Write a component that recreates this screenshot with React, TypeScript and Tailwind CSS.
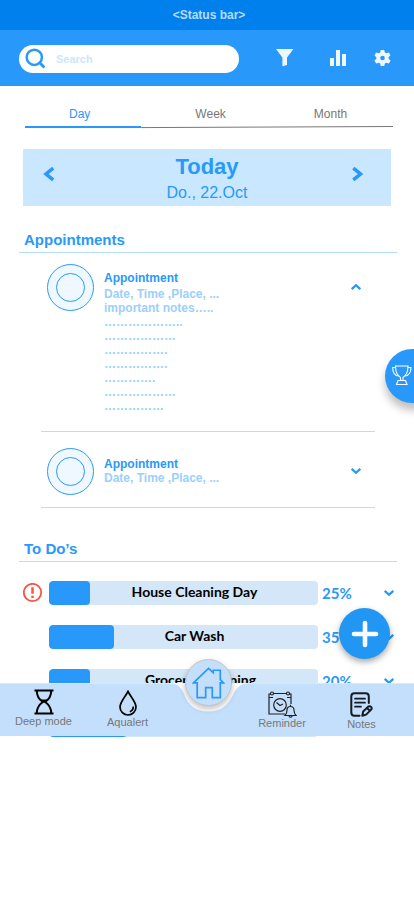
import React from "react";

type Task = { title: string; percent: string; fill: string; shift?: string; urgent?: boolean };

const tasks: Task[] = [
  { title: "House Cleaning Day", percent: "25%", fill: "w-[41px]", urgent: true },
  { title: "Car Wash", percent: "35%", fill: "w-[65px]" },
  { title: "Grocery Shopping", percent: "20%", fill: "w-[41px]", shift: "pl-[34px]" },
  { title: "", percent: "", fill: "w-[78px]" },
];

const notes = [
  "important notes…..",
  "………………..",
  "………………",
  "…………….",
  "…………….",
  "………….",
  "………………",
  "……………",
];

function Chevron({ up = false }: { up?: boolean }) {
  return (
    <svg width="12" height="8" viewBox="0 0 12 8" fill="none" stroke="#2899fb" strokeWidth="2.3">
      <path d={up ? "M1.7 6.2 6 2.2l4.3 4" : "M1.7 1.8 6 5.8l4.3-4"} />
    </svg>
  );
}

function Avatar() {
  return (
    <div className="flex size-[47px] shrink-0 items-center justify-center rounded-full border border-[#2899fb] bg-[#f0f8ff]">
      <div className="size-[29px] rounded-full border border-[#2899fb]" />
    </div>
  );
}

function Header() {
  return (
    <header>
      <div className="flex h-[30px] items-center justify-center bg-[#0080ec] pl-1 text-[12px] font-bold text-[#b5dcff]">
        &lt;Status bar&gt;
      </div>
      <div className="flex h-14 items-center bg-[#2899fb] pl-[19px] pt-0.5">
        <div className="flex h-7 w-[220px] items-center rounded-full bg-white pl-[6px]">
          <svg width="22" height="22" viewBox="0 0 22 22" fill="none" stroke="#2899fb" strokeWidth="2.5">
            <circle cx="9.3" cy="9.300" r="7.6" />
            <path d="m14.5 14.5 4.900 4.900" strokeWidth="2.800" />
          </svg>
          <span className="ml-[9px] text-[11px] font-bold text-[#c9e7ff]">Search</span>
        </div>
        <svg className="-mt-0.5 ml-[37px]" width="18" height="20" viewBox="0 0 18 20" fill="#f0f8ff">
          <path d="M0 1h17.5l-6.500 8.500v7.500L6.4 18.2V9.500z" />
        </svg>
        <svg className="-mt-0.5 ml-9" width="16" height="18" viewBox="0 0 16 18" fill="#f0f8ff">
          <path d="M0 9h4v8H0zM6 1h4v16H6zM12 5h4v12h-4z" />
        </svg>
        <svg className="-mt-0.5 ml-[28px]" width="17" height="18" viewBox="0 0 17 18" fill="#f0f8ff">
          <path
            fillRule="evenodd"
            d="M6.800 1h3.400l.7 2.500 1.400.8 2.600-.7 1.600 3-1.900 1.700v1.500l1.900 1.700-1.600 3-2.600-.7-1.400.8-.7 2.400H6.800l-.7-2.400-1.400-.8-2.600.7-1.600-3 1.900-1.700V8.300L.5 6.600l1.600-3 2.600.7 1.400-.8zM8.500 6.700a2.300 2.300 0 1 0 0 4.600 2.300 2.300 0 0 0 0-4.600z"
          />
        </svg>
      </div>
    </header>
  );
}

function Tabs() {
  return (
    <nav className="ml-[25px] mt-[17px] w-[368px]">
      <div className="mb-px flex h-[22px] items-center text-[12px] text-[#777]">
        <span className="pl-11 text-[#2899fb]">Day</span>
        <span className="ml-[105px]">Week</span>
        <span className="ml-[88px]">Month</span>
      </div>
      <svg className="block" width="368" height="3" viewBox="0 0 368 3">
        <path d="M116 1.600 368 .5" stroke="#777" strokeWidth="1" />
        <path d="M0 1h116" stroke="#2899fb" strokeWidth="2" />
      </svg>
    </nav>
  );
}

function DayBanner() {
  return (
    <div className="ml-[23px] mt-5 flex h-[57px] w-[368px] items-center justify-between bg-[#c9e7ff] pl-5 pr-[27px] text-[#2899fb]">
      <svg width="12" height="16" viewBox="0 0 12 16" fill="none" stroke="#2899fb" strokeWidth="3.500" className="-mt-2">
        <path d="M10.200 2.200 3 8l7.200 5.800" />
      </svg>
      <div className="ml-[7px] flex flex-col items-center pt-[3px]">
        <span className="text-[22px] font-bold leading-[26px]">Today</span>
        <span className="text-[16px] leading-[25px]">Do., 22.Oct</span>
      </div>
      <svg width="12" height="16" viewBox="0 0 12 16" fill="none" stroke="#2899fb" strokeWidth="3.500" className="-mt-[7px]">
        <path d="M1.300 2.200 8.500 8l-7.200 5.800" />
      </svg>
    </div>
  );
}

function SectionTitle({ children }: { children: React.ReactNode }) {
  return (
    <h2 className="ml-[19px] h-6 w-[378px] border-b border-[#b5ddfc] pl-[5px] text-[15px] font-bold leading-[22px] text-[#2899fb]">
      {children}
    </h2>
  );
}

function Appointments() {
  return (
    <section className="mt-[23px]">
      <SectionTitle>Appointments</SectionTitle>
      <article className="ml-[41px] flex h-[179px] w-[334px] items-start border-b border-[#b5ddfc] pl-1.5 pt-[11px] text-[12px] font-bold leading-[14px] text-[#9bd0fd]">
        <Avatar />
        <div className="ml-2.5 w-[243px] pt-[7px]">
          <h3 className="mb-0.5 text-[#2899fb]">Appointment</h3>
          <p>Date, Time ,Place, ...</p>
          {notes.map((line, i) => (
            <p key={i}>{line}</p>
          ))}
        </div>
        <div className="ml-[3px] mt-[19px] shrink-0">
          <Chevron up />
        </div>
      </article>
      <article className="ml-[41px] flex h-[76px] w-[334px] items-center border-b border-[#b5ddfc] pl-1.5 pt-[3px] text-[12px] font-bold leading-[14px] text-[#9bd0fd]">
        <Avatar />
        <div className="-mt-px ml-2.5 w-[243px]">
          <h3 className="text-[#2899fb]">Appointment</h3>
          <p>Date, Time ,Place, ...</p>
        </div>
        <div className="-mt-px ml-[3px] shrink-0">
          <Chevron />
        </div>
      </article>
    </section>
  );
}

function TaskRow({ task }: { task: Task }) {
  return (
    <li className="flex h-6 items-center">
      <div className="w-[26px] shrink-0">
        {task.urgent && (
          <svg width="20" height="20" viewBox="0 0 20 20" fill="none" stroke="#fb5340" strokeWidth="1.800">
            <circle cx="9.500" cy="9.500" r="8.700" />
            <path d="M9.500 4.200v6.500M9.500 12.700v2.200" strokeWidth="2.500" />
          </svg>
        )}
      </div>
      <div className="grid h-6 w-[269px] shrink-0 overflow-hidden rounded bg-[#d3e7f8]">
        <div className={`col-start-1 row-start-1 h-6 rounded bg-[#2899fb] ${task.fill}`} />
        <span
          className={`col-start-1 row-start-1 text-center text-[14px] font-bold leading-[22px] text-black ${task.shift ?? "pl-[22px]"}`}
        >
          {task.title}
        </span>
      </div>
      {task.percent && (
        <>
          <span className="ml-1 w-[61px] pt-px text-[15px] font-bold tracking-[0.1px] text-[#2899fb]">{task.percent}</span>
          <Chevron />
        </>
      )}
    </li>
  );
}

function HourglassIcon() {
  return (
    <svg width="20" height="26" viewBox="0 0 20 26" fill="none" stroke="#000" strokeWidth="2">
      <path d="M.5 1.500h19M.5 24.500h19" />
      <path d="M2.800 2c0 6 2.500 8.500 6 11-3.500 2.500-6 5-6 11M17.200 2c0 6-2.500 8.500-6 11 3.500 2.500 6 5 6 11" />
      <path d="M7 11h6l-3 2.500z" fill="#000" strokeWidth="1" />
    </svg>
  );
}

function DropIcon() {
  return (
    <svg width="20" height="26" viewBox="0 0 20 26" fill="none" stroke="#000" strokeWidth="1.700">
      <path d="M10 1.500C7.500 6.500 2 12 2 17a8 8 0 0 0 16 0c0-5-5.500-10.500-8-15.500z" />
      <path d="M15.300 16.500c0 3-1.500 4.500-3.500 5.200" />
    </svg>
  );
}

function ReminderIcon() {
  return (
    <svg width="29" height="27" viewBox="0 0 29 27" fill="none" stroke="#222" strokeWidth="1.200">
      <path d="M3 3H1v20h16M21 3h2v10M5.500 2.500h13M1 6.500h4M19 6.500h4" />
      <circle cx="4" cy="2.500" r="1.500" />
      <circle cx="20" cy="2.500" r="1.500" />
      <circle cx="12" cy="14" r="6.300" />
      <path d="m8.500 11.500 3.500 3 3-1.500" />
      <path d="M17 24.500h11c-1.700-1.500-2-2.700-2-5.500a3.500 3.500 0 0 0-7 0c0 2.800-.3 4-2 5.500zM21 24.500c0 2.300 3.200 2.300 3.200 0M22.500 15.300V13.800" />
    </svg>
  );
}

function NotesIcon() {
  return (
    <svg width="23" height="25" viewBox="0 0 23 25" fill="none" stroke="#151b22" strokeWidth="2" strokeLinecap="round" strokeLinejoin="round">
      <path d="M9.500 23.700H4.500Q1.300 23.700 1.300 20.500V4.500Q1.300 1.300 4.500 1.300h11Q18.800 1.300 18.800 4.500V11" />
      <path d="M5 6.700h10M5 10.700h10M5 14.700h6" strokeWidth="1.700" />
      <path d="m12.300 23.700.9-4.200 5.200-5q1.500-.8 2.700.4 1.100 1.300.1 2.700l-5.100 5zM17 16l2.700 2.600" strokeWidth="2" />
    </svg>
  );
}

function BottomNav() {
  return (
    <footer className="absolute left-0 top-[683px] h-[53px] w-full bg-[#c3dffc] text-[11px] leading-[13px] text-[#777]">
      <div className="flex h-full border-t border-[#d4e9fd]">
        <div className="flex w-[87px] flex-col items-center pt-[5px]">
          <HourglassIcon />
          <span>Deep mode</span>
        </div>
        <div className="flex w-[81px] flex-col items-center pt-1.5">
          <DropIcon />
          <span>Aqualert</span>
        </div>
        <div className="ml-[72px] flex w-[84px] flex-col items-center pt-[7px]">
          <ReminderIcon />
          <span className="-mt-px">Reminder</span>
        </div>
        <div className="flex w-[75px] flex-col items-center pt-2">
          <NotesIcon />
          <span className="mt-px">Notes</span>
        </div>
      </div>
      <svg className="absolute left-[168px] top-0" width="82" height="30" viewBox="0 0 82 30" fill="#fff">
        <path d="M0 0C10 0 13 4 16 11 20 22 27 28.500 40.500 28.500S60 22 65 12C68 5 72 0 82 0z" />
      </svg>
      <button className="absolute -top-6 left-[185px] flex size-[47px] items-center justify-center rounded-full border border-[#c0c4cc] bg-[#c3dffc] shadow-[0_3px_6px_rgba(0,0,0,0.25)]">
        <svg width="33" height="33" viewBox="0 0 35 35" fill="none" stroke="#2899fb" strokeWidth="1.800">
          <path d="M1.500 18 17.500 2.500 22.500 7V4.500h7.500v10L33.500 18H30v15.500h-8.500V23h-7v10.500H5.500V18z" />
        </svg>
      </button>
    </footer>
  );
}

export default function App() {
  return (
    <main className="relative h-[901px] w-[414px] overflow-hidden bg-white font-['Liberation_Sans',Arial,sans-serif]">
      <Header />
      <Tabs />
      <DayBanner />
      <Appointments />
      <section className="mt-[30px]">
        <SectionTitle>To Do’s</SectionTitle>
        <ul className="ml-[23px] mt-[19px] flex flex-col gap-5 font-['Lato',sans-serif]">
          {tasks.map((task, i) => (
            <TaskRow key={i} task={task} />
          ))}
        </ul>
      </section>
      <button className="absolute left-[385px] top-[349px] flex h-[54px] w-[60px] items-center rounded-full bg-[#2899fb] pb-0.5 pl-[7px] shadow-[0_7px_9px_rgba(0,0,0,0.25)]">
        <svg width="20" height="20" viewBox="0 0 20 20" fill="none" stroke="#fff" strokeWidth="1.100">
          <path d="M3.500 1h12.500c0 6-1.500 9.500-5 11.500v3H8.500v-3C5 10.500 3.500 7 3.500 1zM3.500 2.500H.7c0 5 2.300 8.500 6.300 8.500M16 2.500h3c0 5-2.500 8.500-6.500 8.500M6 15.500h7.500l1.500 4H4.500z" />
        </svg>
      </button>
      <button className="absolute left-[339px] top-[608px] flex size-[51px] items-center justify-center rounded-full bg-[#2296f3] shadow-[0_3px_6px_rgba(0,0,0,0.35)]">
        <svg width="28" height="28" viewBox="0 0 28 28" stroke="#f8fbff" strokeWidth="4.600" strokeLinecap="round">
          <path d="M14 3v22M3 14h22" />
        </svg>
      </button>
      <BottomNav />
    </main>
  );
}
